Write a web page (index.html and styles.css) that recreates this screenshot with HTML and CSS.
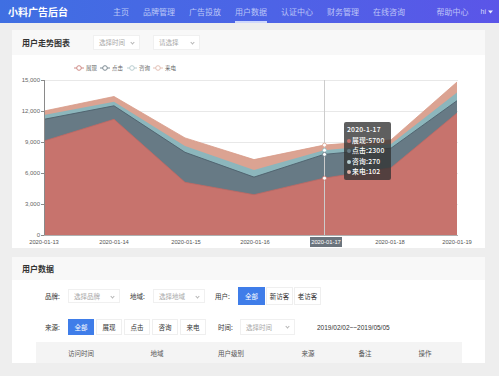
FILE: index.html
```html
<!DOCTYPE html>
<html lang="zh-CN">
<head>
    <meta charset="UTF-8">
    <meta name="viewport" content="width=device-width, initial-scale=1.0">
    <title>小料广告后台 - 用户数据</title>
    <link rel="stylesheet" href="styles.css">
</head>
<body>
    <header class="topbar">
        <div class="brand">小料广告后台</div>
        <nav class="nav">
            <a>主页</a>
            <a>品牌管理</a>
            <a>广告投放</a>
            <a class="active">用户数据</a>
            <a>认证中心</a>
            <a>财务管理</a>
            <a>在线咨询</a>
        </nav>
        <div class="topbar-right">
            <a>帮助中心</a>
            <span class="user">hi <svg width="5" height="4" viewBox="0 0 5 4"><path d="M0 0.5 L2.5 3.5 L5 0.5 Z" fill="#e6e9ff"/></svg></span>
        </div>
    </header>

    <section class="card">
        <div class="card-header">
            <h2>用户走势图表</h2>
            <div class="select sel-time">选择时间<i class="chev"></i></div>
            <div class="select sel-any">请选择<i class="chev"></i></div>
        </div>
        <div class="chart">
            <svg width="473" height="193" viewBox="12 55 473 193">
                <!-- legend -->
                <g class="legend">
                    <line x1="74" y1="68" x2="84" y2="68" stroke="#cf8b86"/><circle cx="79" cy="68" r="2.3" fill="#fff" stroke="#cf8b86"/>
                    <text x="86" y="70">展现</text>
                    <line x1="100" y1="68" x2="110" y2="68" stroke="#7d8b94"/><circle cx="105" cy="68" r="2.3" fill="#fff" stroke="#7d8b94"/>
                    <text x="112" y="70">点击</text>
                    <line x1="127" y1="68" x2="137" y2="68" stroke="#b9cdd0"/><circle cx="132" cy="68" r="2.3" fill="#fff" stroke="#b9cdd0"/>
                    <text x="139" y="70">咨询</text>
                    <line x1="153" y1="68" x2="163" y2="68" stroke="#e3c0b5"/><circle cx="158" cy="68" r="2.3" fill="#fff" stroke="#e3c0b5"/>
                    <text x="165" y="70">来电</text>
                </g>

                <!-- grid -->
                <g stroke="#e8e8e8" stroke-width="1">
                    <line x1="44" y1="80.5" x2="458" y2="80.5"/>
                    <line x1="44" y1="111.5" x2="458" y2="111.5"/>
                    <line x1="44" y1="142.5" x2="458" y2="142.5"/>
                    <line x1="44" y1="173.5" x2="458" y2="173.5"/>
                    <line x1="44" y1="204.5" x2="458" y2="204.5"/>
                </g>

                <!-- stacked areas, top layer first -->
                <polygon fill="#dba392" points="44,111 114,96.5 185,137.9 254,159.6 324,145.1 391,139.9 457,82 457,235 44,235"/>
                <polygon fill="#8cb6bc" points="44,115.1 114,101.7 185,146.1 254,169.9 324,150.3 391,144.1 457,92.4 457,235 44,235"/>
                <polygon fill="#677a85" points="44,119.3 114,105.8 185,152.3 254,177.1 324,154.4 391,148.2 457,100.7 457,235 44,235"/>
                <polygon fill="#c7736d" points="44,141 114,119.3 185,182.3 254,194.7 324,178.2 391,167.8 457,113.1 457,235 44,235"/>
                <polyline fill="none" stroke="#d89a88" stroke-width="0.8" points="44,111 114,96.5 185,137.9 254,159.6 324,145.1 391,139.9 457,82"/>
                <polyline fill="none" stroke="#4d606c" stroke-width="0.9" points="44,119.3 114,105.8 185,152.3 254,177.1 324,154.4 391,148.2 457,100.7"/>
                <polyline fill="none" stroke="#bf6863" stroke-width="0.8" points="44,141 114,119.3 185,182.3 254,194.7 324,178.2 391,167.8 457,113.1"/>

                <!-- axis pointer -->
                <line x1="324.5" y1="80" x2="324.5" y2="235" stroke="#cccccc" stroke-width="1"/>
                <g fill="#fff" stroke-width="0.8">
                    <circle cx="324.5" cy="145.1" r="2" stroke="#dba392"/>
                    <circle cx="324.5" cy="150.3" r="2" stroke="#8cb6bc"/>
                    <circle cx="324.5" cy="154.4" r="2" stroke="#677a85"/>
                    <circle cx="324.5" cy="178.2" r="2" stroke="#c7736d"/>
                </g>

                <!-- axes -->
                <line x1="44.5" y1="80" x2="44.5" y2="235" stroke="#8a8a8a"/>
                <line x1="44" y1="235.5" x2="458" y2="235.5" stroke="#b0b0b0"/>
                <g stroke="#8a8a8a">
                    <line x1="41" y1="80.5" x2="44" y2="80.5"/>
                    <line x1="41" y1="111.5" x2="44" y2="111.5"/>
                    <line x1="41" y1="142.5" x2="44" y2="142.5"/>
                    <line x1="41" y1="173.5" x2="44" y2="173.5"/>
                    <line x1="41" y1="204.5" x2="44" y2="204.5"/>
                    <line x1="41" y1="235.5" x2="44" y2="235.5"/>
                </g>
                <g class="ylabels">
                    <text x="40" y="82">15,000</text>
                    <text x="40" y="113">12,000</text>
                    <text x="40" y="144">9,000</text>
                    <text x="40" y="175">6,000</text>
                    <text x="40" y="206">3,000</text>
                    <text x="40" y="237">0</text>
                </g>
                <rect x="310" y="237" width="32" height="10" fill="#6b747d"/>
                <g class="xlabels">
                    <text x="44" y="244">2020-01-13</text>
                    <text x="114" y="244">2020-01-14</text>
                    <text x="186" y="244">2020-01-15</text>
                    <text x="255" y="244">2020-01-16</text>
                    <text class="current" x="326" y="244">2020-01-17</text>
                    <text x="390" y="244">2020-01-18</text>
                    <text x="457" y="244">2020-01-19</text>
                </g>
            </svg>

            <div class="tooltip">
                <div class="tip-date">2020-1-17</div>
                <div><i class="dot" style="background:#c7736d"></i>展现:5700</div>
                <div><i class="dot" style="background:#677a85"></i>点击:2300</div>
                <div><i class="dot" style="background:#b7cfd2"></i>咨询:270</div>
                <div><i class="dot" style="background:#e0b0a3"></i>来电:102</div>
            </div>
        </div>
    </section>

    <section class="card card-data">
        <div class="card-header">
            <h2>用户数据</h2>
        </div>
        <div class="filters">
            <div class="filter-row row-1">
                <label>品牌:</label>
                <div class="select sel-wide">选择品牌<i class="chev"></i></div>
                <label class="ml">地域:</label>
                <div class="select sel-wide">选择地域<i class="chev"></i></div>
                <label class="ml">用户:</label>
                <div class="btn-group">
                    <span class="btn active">全部</span>
                    <span class="btn">新访客</span>
                    <span class="btn">老访客</span>
                </div>
            </div>
            <div class="filter-row row-2">
                <label>来源:</label>
                <div class="btn-group">
                    <span class="btn active">全部</span>
                    <span class="btn">展现</span>
                    <span class="btn">点击</span>
                    <span class="btn">咨询</span>
                    <span class="btn">来电</span>
                </div>
                <label class="ml-time">时间:</label>
                <div class="select sel-date">选择时间<i class="chev"></i></div>
                <span class="date-range">2019/02/02~~2019/05/05</span>
            </div>
        </div>
        <div class="table-head">
            <span>访问时间</span>
            <span>地域</span>
            <span>用户级别</span>
            <span>来源</span>
            <span>备注</span>
            <span>操作</span>
        </div>
    </section>
</body>
</html>
```

FILE: styles.css
```css
* {
    margin: 0;
    padding: 0;
    box-sizing: border-box;
}

body {
    font-family: "Noto Sans CJK SC", "Noto Sans", sans-serif;
    background: #eeeeee;
    width: 499px;
    height: 376px;
    overflow: hidden;
    color: #333;
}

/* top bar */
.topbar {
    height: 23px;
    display: flex;
    align-items: center;
    padding: 0 6px 0 8px;
    background: linear-gradient(90deg, #3f6fe2 0%, #4d63e6 55%, #5b55e8 100%);
    color: #fff;
}

.brand {
    width: 105px;
    font-size: 10px;
    font-weight: 700;
    line-height: 23px;
}

.nav {
    display: flex;
    gap: 14px;
    height: 23px;
}

.nav a,
.topbar-right a {
    font-size: 8px;
    line-height: 23px;
    color: rgba(230, 236, 255, 0.72);
}

.nav a.active {
    box-shadow: inset 0 -2px 0 rgba(230, 236, 255, 0.85);
}

.topbar-right {
    margin-left: auto;
    display: flex;
    align-items: center;
    gap: 12px;
}

.user {
    font-family: "Liberation Sans", sans-serif;
    font-size: 7px;
    color: rgba(235, 240, 255, 0.85);
    display: flex;
    align-items: center;
    gap: 2px;
}

/* cards */
.card {
    margin: 7px 14px 0 12px;
    background: #fff;
}

.card-data {
    margin-top: 9px;
}

.card-header {
    height: 25px;
    display: flex;
    align-items: center;
    padding-left: 10px;
    background: #f8f8f8;
}

.card-data .card-header {
    height: 23px;
}

.card-header h2 {
    font-size: 8px;
    font-weight: 700;
    color: #333;
    width: 71px;
}

.select {
    position: relative;
    height: 15px;
    background: #fff;
    border: 1px solid #f0f0f0;
    font-size: 6.5px;
    color: #a8a8a8;
    line-height: 13px;
    padding-left: 5px;
}

.chev {
    position: absolute;
    right: 5px;
    top: 5px;
    width: 3px;
    height: 3px;
    border-right: 1px solid #b5b5b5;
    border-bottom: 1px solid #b5b5b5;
    transform: rotate(45deg);
}

.sel-time { width: 47px; }
.sel-any { width: 47px; margin-left: 13px; }

/* chart */
.chart {
    position: relative;
    height: 193px;
}

.chart svg {
    display: block;
}

.legend text {
    font-size: 5.5px;
    fill: #666;
}

.ylabels text {
    font-family: "Liberation Sans", sans-serif;
    font-size: 6px;
    fill: #666;
    text-anchor: end;
}

.xlabels text {
    font-family: "Liberation Sans", sans-serif;
    font-size: 5.8px;
    fill: #555;
    text-anchor: middle;
}

.xlabels text.current {
    fill: #fff;
}

.tooltip {
    position: absolute;
    left: 332px;
    top: 67px;
    width: 47px;
    height: 58px;
    padding: 2px 3px;
    background: rgba(50, 50, 50, 0.78);
    border-radius: 2px;
    color: #fff;
    font-size: 6.8px;
    font-weight: 500;
    line-height: 10.5px;
    letter-spacing: 0.2px;
    white-space: nowrap;
}

.tooltip .dot {
    display: inline-block;
    width: 4px;
    height: 4px;
    border-radius: 50%;
    margin-right: 1px;
    vertical-align: 0;
}

/* user data */
.filters {
    padding: 7px 0 0 33px;
}

.filter-row {
    display: flex;
    align-items: center;
}

.row-2 {
    margin-top: 14px;
}

.filter-row label {
    width: 23px;
    font-size: 6.5px;
    color: #333;
}

.filter-row .ml {
    margin-left: 10px;
}

.filter-row .ml-time {
    margin-left: 12px;
    width: 22px;
}

.sel-wide {
    width: 52px;
    height: 14px;
    line-height: 12px;
}

.sel-date {
    width: 55px;
    height: 16px;
    line-height: 14px;
}

.btn-group {
    display: flex;
    gap: 1px;
}

.row-2 .btn-group {
    gap: 2px;
}

.btn {
    width: 27px;
    height: 18px;
    line-height: 16px;
    text-align: center;
    font-size: 6.5px;
    color: #333;
    background: #fff;
    border: 1px solid #efefef;
}

.row-2 .btn {
    width: 26px;
    height: 16px;
    line-height: 14px;
}

.btn.active {
    background: #3f7de9;
    border-color: #3f7de9;
    color: #fff;
}

.date-range {
    margin-left: 22px;
    font-family: "Liberation Sans", sans-serif;
    font-size: 6.5px;
    color: #333;
}

.table-head {
    margin: 7px 23px 0 24px;
    height: 21px;
    display: grid;
    grid-template-columns: 90px 62px 86px 68px 46px 74px;
    align-items: center;
    background: #f4f4f4;
    font-size: 6.5px;
    color: #555;
    text-align: center;
}
```
